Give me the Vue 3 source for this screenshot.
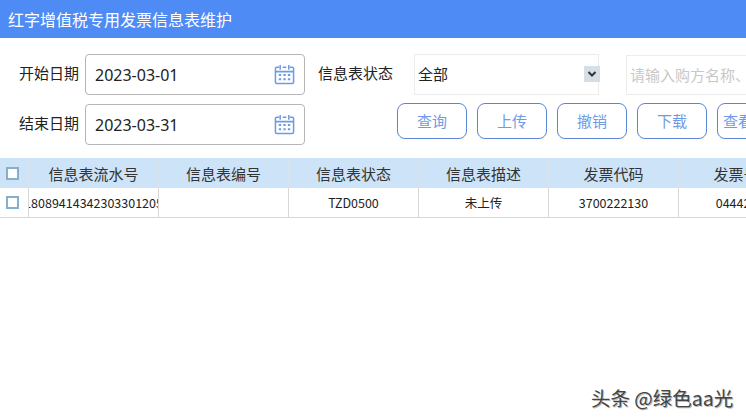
<script setup>
const columns = ['信息表流水号', '信息表编号', '信息表状态', '信息表描述', '发票代码', '发票号码']
const row = ['18089414342303301205', '', 'TZD0500', '未上传', '3700222130', '04442000']
const buttons = ['查询', '上传', '撤销', '下载', '查看详情']
const dates = [
  { label: '开始日期', value: '2023-03-01' },
  { label: '结束日期', value: '2023-03-31' }
]
</script>

<template>
  <div class="page">
    <header class="title">红字增值税专用发票信息表维护</header>
    <section class="form">
      <div class="dates">
        <div v-for="d in dates" :key="d.label" class="date-row">
          <span class="label">{{ d.label }}</span>
          <div class="date-input">
            <span class="date-value">{{ d.value }}</span>
            <svg class="cal" viewBox="0 0 22 22" width="21" height="21" fill="none" stroke="#6f9be6" stroke-width="1.6">
              <path d="M5.500 3.500H2.800a1.300 1.300 0 0 0-1.300 1.300v14.400a1.300 1.300 0 0 0 1.300 1.300h16.400a1.300 1.300 0 0 0 1.300-1.300V4.800a1.300 1.300 0 0 0-1.300-1.300h-2.700" />
              <path d="M9 3.500h4M1.500 8h19M6.500 1v5M15.500 1v5" />
              <path d="M5 11.500h2.500M9.800 11.500h2.500M14.500 11.500H17M5 16h2.500M9.800 16h2.500M14.500 16H17" stroke-width="2" />
            </svg>
          </div>
        </div>
      </div>
      <div class="right">
        <div class="filters">
          <span class="label status-label">信息表状态</span>
          <div class="select">
            <span>全部</span>
            <span class="arrow">
              <svg viewBox="0 0 10 8" width="10" height="8" fill="none" stroke="#333" stroke-width="2"><path d="M1.500 2l3.500 3.500L8.500 2" /></svg>
            </span>
          </div>
          <div class="search">请输入购方名称、税号</div>
        </div>
        <div class="actions">
          <button v-for="b in buttons" :key="b" class="btn" type="button">{{ b }}</button>
        </div>
      </div>
    </section>
    <table class="grid">
      <colgroup>
        <col class="col-check" />
        <col v-for="c in columns" :key="c" class="col-data" />
      </colgroup>
      <thead>
        <tr>
          <th><span class="check"></span></th>
          <th v-for="c in columns" :key="c">{{ c }}</th>
        </tr>
      </thead>
      <tbody>
        <tr>
          <td><span class="check"></span></td>
          <td v-for="(v, i) in row" :key="i"><div class="cell">{{ v }}</div></td>
        </tr>
      </tbody>
    </table>
    <div class="mark">头条 @绿色aa光</div>
  </div>
</template>

<style scoped>
.page {
  position: relative;
  width: 746px;
  height: 420px;
  overflow: hidden;
  background: #fff;
  color: #222;
  font-family: "Noto Sans CJK SC", "Noto Sans", sans-serif;
}
.title {
  height: 38px;
  line-height: 38px;
  padding-left: 8px;
  background: #4f8bf4;
  color: #fff;
  font-size: 16px;
}
.form {
  display: flex;
  width: 900px;
  padding-top: 16px;
}
.dates {
  display: flex;
  flex-direction: column;
  gap: 9px;
  padding-left: 19px;
}
.date-row {
  display: flex;
  align-items: center;
  gap: 6px;
}
.label {
  font-size: 15px;
  line-height: 20px;
  width: 60px;
  margin-top: -3px;
  white-space: nowrap;
}
.date-input {
  box-sizing: border-box;
  display: flex;
  align-items: center;
  justify-content: space-between;
  width: 220px;
  height: 41px;
  padding: 0 9px;
  border: 1px solid #b5b5b5;
  border-radius: 4px;
}
.date-value {
  font-family: "Noto Sans", sans-serif;
  font-size: 16px;
}
.cal {
  flex: none;
}
.right {
  margin-left: 13px;
  display: flex;
  flex-direction: column;
}
.filters {
  display: flex;
  align-items: center;
  height: 41px;
}
.status-label {
  width: 96px;
  flex: none;
}
.select {
  box-sizing: border-box;
  display: flex;
  align-items: center;
  justify-content: space-between;
  width: 185px;
  height: 41px;
  padding: 0 0 2px 3px;
  border: 1px solid #ececec;
  font-size: 15px;
  line-height: 36px;
}
.arrow {
  display: flex;
  align-items: center;
  justify-content: center;
  width: 16px;
  height: 16px;
  margin-right: -2px;
  background: #d5dfe8;
}
.search {
  box-sizing: border-box;
  flex: none;
  width: 200px;
  height: 40px;
  line-height: 38px;
  margin-left: 27px;
  padding-left: 3px;
  border: 1px solid #ececec;
  color: #c8c8c8;
  font-size: 15px;
  white-space: nowrap;
}
.actions {
  display: flex;
  gap: 10px;
  margin-top: 8px;
  margin-left: 79px;
}
.btn {
  flex: none;
  width: 70px;
  height: 36px;
  padding: 0 5px 1px;
  border: 1px solid #5b86d8;
  border-radius: 8px;
  background: #fff;
  color: #6f9be6;
  font-family: inherit;
  font-size: 15px;
  white-space: nowrap;
}
.grid {
  margin-top: 13px;
  width: 809px;
  table-layout: fixed;
  border-collapse: separate;
  border-spacing: 0;
}
.col-check {
  width: 29px;
}
.col-data {
  width: 130px;
}
th {
  height: 30px;
  padding: 0;
  background: #cde3f7;
  border-right: 1px solid #dbe3ea;
  box-sizing: border-box;
  font-weight: 400;
  font-size: 15px;
  color: #333;
}
td {
  height: 30px;
  box-sizing: border-box;
  padding: 0;
  text-align: center;
  font-size: 12.500px;
  border-right: 1px solid #d8d8d8;
  border-bottom: 1px solid #d8d8d8;
  color: #222;
}
.cell {
  display: flex;
  justify-content: center;
  overflow: hidden;
  white-space: nowrap;
}
.check {
  display: block;
  box-sizing: border-box;
  width: 13px;
  height: 13px;
  margin: 0 0 0 6px;
  border: 2px solid #86aecd;
  background: #fff;
}
.mark {
  position: absolute;
  left: 591px;
  top: 386px;
  font-size: 19.500px;
  line-height: 24px;
  color: #444;
  white-space: nowrap;
  text-shadow: 1px 1px 0 #bbb, -1px -1px 0 #fff;
}
</style>
